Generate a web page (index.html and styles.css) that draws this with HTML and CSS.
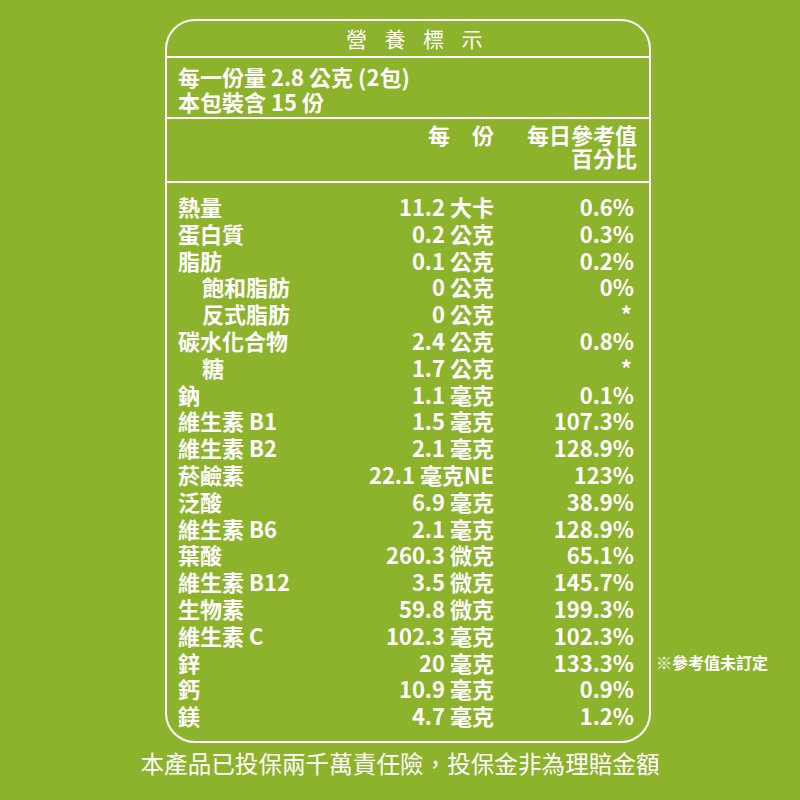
FILE: index.html
```html
<!DOCTYPE html>
<html lang="zh-Hant">
<head>
<meta charset="utf-8">
<title>營養標示</title>
<link rel="stylesheet" href="styles.css">
</head>
<body>
<main class="page">
  <section class="label">
    <h1 class="title">營養標示</h1>
    <div class="serving">
      <div>每一份量 2.8 公克 (2包)</div>
      <div>本包裝含 15 份</div>
    </div>
    <div class="head">
      <div></div>
      <div class="amt">每　份</div>
      <div class="pct">每日參考值<br>百分比</div>
    </div>
    <div class="rows">
      <div class="row"><div>熱量</div><div class="amt">11.2 大卡</div><div class="pct">0.6%</div></div>
      <div class="row"><div>蛋白質</div><div class="amt">0.2 公克</div><div class="pct">0.3%</div></div>
      <div class="row"><div>脂肪</div><div class="amt">0.1 公克</div><div class="pct">0.2%</div></div>
      <div class="row"><div class="sub">飽和脂肪</div><div class="amt">0 公克</div><div class="pct">0%</div></div>
      <div class="row"><div class="sub">反式脂肪</div><div class="amt">0 公克</div><div class="pct star">*</div></div>
      <div class="row"><div>碳水化合物</div><div class="amt">2.4 公克</div><div class="pct">0.8%</div></div>
      <div class="row"><div class="sub">糖</div><div class="amt">1.7 公克</div><div class="pct star">*</div></div>
      <div class="row"><div>鈉</div><div class="amt">1.1 毫克</div><div class="pct">0.1%</div></div>
      <div class="row"><div>維生素 B1</div><div class="amt">1.5 毫克</div><div class="pct">107.3%</div></div>
      <div class="row"><div>維生素 B2</div><div class="amt">2.1 毫克</div><div class="pct">128.9%</div></div>
      <div class="row"><div>菸鹼素</div><div class="amt">22.1 毫克NE</div><div class="pct">123%</div></div>
      <div class="row"><div>泛酸</div><div class="amt">6.9 毫克</div><div class="pct">38.9%</div></div>
      <div class="row"><div>維生素 B6</div><div class="amt">2.1 毫克</div><div class="pct">128.9%</div></div>
      <div class="row"><div>葉酸</div><div class="amt">260.3 微克</div><div class="pct">65.1%</div></div>
      <div class="row"><div>維生素 B12</div><div class="amt">3.5 微克</div><div class="pct">145.7%</div></div>
      <div class="row"><div>生物素</div><div class="amt">59.8 微克</div><div class="pct">199.3%</div></div>
      <div class="row"><div>維生素 C</div><div class="amt">102.3 毫克</div><div class="pct">102.3%</div></div>
      <div class="row"><div>鋅</div><div class="amt">20 毫克</div><div class="pct">133.3%</div><span class="note">※參考值未訂定</span></div>
      <div class="row"><div>鈣</div><div class="amt">10.9 毫克</div><div class="pct">0.9%</div></div>
      <div class="row"><div>鎂</div><div class="amt">4.7 毫克</div><div class="pct">1.2%</div></div>
    </div>
  </section>
  <p class="footer">本產品已投保兩千萬責任險，投保金非為理賠金額</p>
</main>
</body>
</html>
```

FILE: styles.css
```css
html, body {
  margin: 0;
  padding: 0;
}
body {
  background: #8db22b;
  color: #ffffff;
  font-family: "Noto Sans CJK TC", "Noto Sans", sans-serif;
  width: 800px;
  height: 800px;
  overflow: hidden;
}
.page {
  display: flex;
  flex-direction: column;
  padding-top: 19px;
}
.label {
  margin-left: 165px;
  width: 486px;
  height: 724px;
  box-sizing: border-box;
  border: 2px solid #ffffff;
  border-radius: 30px;
  display: flex;
  flex-direction: column;
}
.title {
  margin: 0;
  height: 37px;
  box-sizing: border-box;
  border-bottom: 2px solid #ffffff;
  font-size: 21px;
  font-weight: 400;
  line-height: 34px;
  letter-spacing: 17.5px;
  text-align: center;
  padding-left: 30px;
}
.serving {
  height: 61px;
  box-sizing: border-box;
  border-bottom: 2px solid #ffffff;
  padding: 6px 0 0 11px;
  font-size: 22px;
  font-weight: 700;
  line-height: 25px;
}
.head {
  height: 64px;
  box-sizing: border-box;
  border-bottom: 2px solid #ffffff;
  display: grid;
  grid-template-columns: 1fr 180px 143px;
  padding: 4px 12px 0 11px;
  font-size: 22px;
  font-weight: 700;
  line-height: 23px;
}
.rows {
  padding: 10px 15px 0 11px;
}
.row {
  position: relative;
  display: grid;
  grid-template-columns: 1fr 180px 140px;
  font-size: 22px;
  font-weight: 700;
  line-height: 26.8px;
  height: 26.8px;
}
.amt, .pct {
  text-align: right;
}
.sub {
  padding-left: 24px;
}
.star {
  padding-right: 2px;
}
.note {
  position: absolute;
  left: 478px;
  top: 0;
  font-size: 16px;
  font-weight: 700;
  white-space: nowrap;
  line-height: 26.8px;
}
.footer {
  margin: 4px 0 0 0;
  text-align: center;
  font-size: 23.6px;
  font-weight: 400;
  line-height: 32px;
}
```
